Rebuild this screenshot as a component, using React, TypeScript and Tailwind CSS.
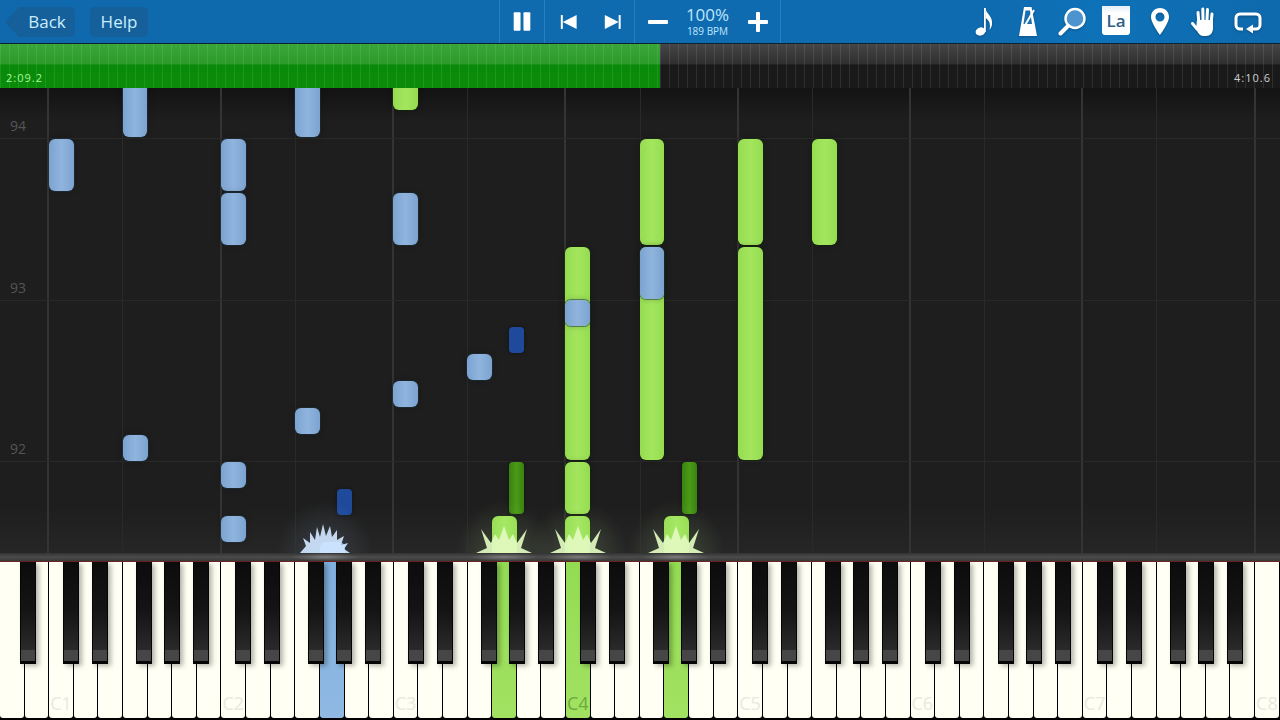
import React from "react";

const FONT = "font-['Open_Sans','Liberation_Sans',sans-serif]";

type NoteKind = "blue" | "green" | "navy" | "moss";
type Note = { x: number; y: number; w: number; h: number; kind: NoteKind };

// y values are page coordinates, the roll starts at 88
const notes: Note[] = [
  { x: 123, y: 80, w: 24, h: 57, kind: "blue" },
  { x: 295, y: 80, w: 25, h: 57, kind: "blue" },
  { x: 393, y: 80, w: 25, h: 30, kind: "green" },
  { x: 49, y: 139, w: 25, h: 52, kind: "blue" },
  { x: 221, y: 139, w: 25, h: 52, kind: "blue" },
  { x: 221, y: 193, w: 25, h: 52, kind: "blue" },
  { x: 393, y: 193, w: 25, h: 52, kind: "blue" },
  { x: 640, y: 139, w: 24, h: 106, kind: "green" },
  { x: 738, y: 139, w: 25, h: 106, kind: "green" },
  { x: 812, y: 139, w: 25, h: 106, kind: "green" },
  { x: 565, y: 247, w: 25, h: 213, kind: "green" },
  { x: 640, y: 247, w: 24, h: 213, kind: "green" },
  { x: 738, y: 247, w: 25, h: 213, kind: "green" },
  { x: 640, y: 247, w: 24, h: 52, kind: "blue" },
  { x: 565, y: 300, w: 25, h: 26, kind: "blue" },
  { x: 509, y: 327, w: 15, h: 26, kind: "navy" },
  { x: 467, y: 354, w: 25, h: 26, kind: "blue" },
  { x: 393, y: 381, w: 25, h: 26, kind: "blue" },
  { x: 295, y: 408, w: 25, h: 26, kind: "blue" },
  { x: 123, y: 435, w: 25, h: 26, kind: "blue" },
  { x: 221, y: 462, w: 25, h: 26, kind: "blue" },
  { x: 221, y: 516, w: 25, h: 26, kind: "blue" },
  { x: 337, y: 489, w: 15, h: 26, kind: "navy" },
  { x: 509, y: 462, w: 15, h: 52, kind: "moss" },
  { x: 682, y: 462, w: 15, h: 52, kind: "moss" },
  { x: 565, y: 462, w: 25, h: 52, kind: "green" },
  { x: 492, y: 516, w: 25, h: 50, kind: "green" },
  { x: 565, y: 516, w: 25, h: 50, kind: "green" },
  { x: 664, y: 516, w: 25, h: 50, kind: "green" },
  { x: 320, y: 542, w: 25, h: 26, kind: "blue" },
];

const noteStyles: Record<NoteKind, string> = {
  blue: "rounded-[6px] bg-[linear-gradient(90deg,#7ca3d0,#8fb4de_50%,#7ca3d0)] shadow-[0_0_0_1px_rgba(30,50,60,0.5),0_0_6px_rgba(0,0,0,0.25)]",
  green: "rounded-[6px] bg-[linear-gradient(90deg,#95dc50,#a3e65e_50%,#95dc50)] shadow-[0_0_0_1px_rgba(20,40,10,0.5),0_0_6px_rgba(0,0,0,0.25)]",
  navy: "rounded-[4px] bg-[#1f4a9c] shadow-[0_0_4px_rgba(0,0,0,0.4)]",
  moss: "rounded-[4px] bg-[linear-gradient(90deg,#39820f,#4a9a18_50%,#39820f)] shadow-[0_0_4px_rgba(0,0,0,0.4)]",
};

const octaveLines = [47, 220, 392, 564, 737, 909, 1081, 1254];
const fLines = [122, 295, 467, 640, 812, 984, 1156];
const measures = [
  { label: "94", line: 138 },
  { label: "93", line: 300 },
  { label: "92", line: 461 },
];

const whiteKeys = Array.from({ length: 52 }, (_, i) => i);
const labels: Record<number, string> = { 2: "C1", 9: "C2", 16: "C3", 23: "C4", 30: "C5", 37: "C6", 44: "C7", 51: "C8" };
const pressed: Record<number, string> = {
  13: "bg-[linear-gradient(180deg,#7fb0de,#8fb9e3)]",
  20: "bg-[linear-gradient(180deg,#93dc52,#a2e262)]",
  23: "bg-[linear-gradient(180deg,#93dc52,#a2e262)]",
  27: "bg-[linear-gradient(180deg,#93dc52,#a2e262)]",
};

const blackKeys: number[] = [20];
for (let o = 0; o < 7; o++) {
  for (const off of [0, 29, 73, 101, 130]) blackKeys.push(Math.round(63 + o * 172.3 + off));
}

const greenSpikes =
  "27,60 38,55 32,36 42,50 46,41 50,47 55,33 60,47 64,41 68,50 78,36 72,55 83,60";
const blueSpikes =
  "30,60 36,53 33,45 40,50 40,39 45,47 47,34 50,44 53,31 56,43 60,33 62,44 67,37 67,47 74,43 71,52 78,50 74,56 80,60";

const flares = [
  { x: 325, points: blueSpikes, color: "#cfe6ff", glow: "rgba(170,210,255,0.16)" },
  { x: 504, points: greenSpikes, color: "#e2fac0", glow: "rgba(200,255,160,0.18)" },
  { x: 578, points: greenSpikes, color: "#e2fac0", glow: "rgba(200,255,160,0.18)" },
  { x: 676, points: greenSpikes, color: "#e2fac0", glow: "rgba(200,255,160,0.18)" },
];

function Flare({ x, points, color, glow }: { x: number; points: string; color: string; glow: string }) {
  return (
    <div className="absolute bottom-0 h-[60px] w-[110px]" style={{ left: x - 55 }}>
      <div className="absolute inset-0" style={{ background: `radial-gradient(ellipse at 50% 100%, ${glow}, transparent 62%)` }} />
      <svg viewBox="0 0 110 60" className="absolute inset-0 h-full w-full">
        <defs>
          <filter id="flareBlur" x="-20%" y="-20%" width="140%" height="140%">
            <feGaussianBlur stdDeviation="0.7" />
          </filter>
        </defs>
        <polygon filter="url(#flareBlur)" fill={color} fillOpacity="0.92" points={points} />
      </svg>
    </div>
  );
}

function PianoRoll() {
  return (
    <div className="relative flex-1 overflow-hidden bg-[linear-gradient(180deg,#131313,#1e1e1e_7%,#1e1e1e_90%,#262626)]">
      {octaveLines.map((x) => (
        <div key={x} className="absolute inset-y-0 w-[2px] bg-[#343434]" style={{ left: x }} />
      ))}
      {fLines.map((x) => (
        <div key={x} className="absolute inset-y-0 w-px bg-[#2a2a2a]" style={{ left: x }} />
      ))}
      {measures.map((m) => (
        <React.Fragment key={m.label}>
          <div className="absolute inset-x-0 h-px bg-[#292929]" style={{ top: m.line - 88 }} />
          <span
            className={`absolute left-[10px] text-[14px] leading-[18px] text-[#555555] ${FONT}`}
            style={{ top: m.line - 88 - 21 }}
          >
            {m.label}
          </span>
        </React.Fragment>
      ))}
      {notes.map((n, i) => (
        <div
          key={i}
          className={`absolute ${noteStyles[n.kind]}`}
          style={{ left: n.x, top: n.y - 88, width: n.w, height: n.h }}
        />
      ))}
      {flares.map((f) => (
        <Flare key={f.x} {...f} />
      ))}
    </div>
  );
}

function Keyboard() {
  return (
    <div className="relative flex h-[158px] bg-black">
      {whiteKeys.map((i) => (
        <div
          key={i}
          className={`relative mb-[2px] mr-px flex flex-1 items-end justify-center rounded-b-[3px] pb-[3px] ${pressed[i] ?? "bg-[#fffff3]"}`}
        >
          {labels[i] && (
            <span className={`text-[18px] leading-[24px] ${i === 23 ? "text-[#6fa83f]" : "text-[#e9e9de]"} ${FONT}`}>
              {labels[i]}
            </span>
          )}
        </div>
      ))}
      {blackKeys.map((x) => (
        <div
          key={x}
          className="absolute top-0 flex h-[102px] w-[16px] flex-col bg-[#050505] px-[1px] pb-[3px] shadow-[3px_2px_5px_rgba(0,0,0,0.3)]"
          style={{ left: x }}
        >
          <div className="flex-1 bg-[linear-gradient(180deg,#0c0c0c,#141414_55%,#2a2a2a)]" />
          <div className="h-[11px] bg-[#464646]" />
        </div>
      ))}
    </div>
  );
}

function IconCell({ children }: { children: React.ReactNode }) {
  return (
    <svg viewBox="0 0 44 43" className="h-[43px] w-[44px] drop-shadow-[0_1px_1px_rgba(0,0,0,0.25)]" fill="white">
      {children}
    </svg>
  );
}

function Header() {
  return (
    <div className={`flex h-[44px] border-b border-[#0b2233] bg-[linear-gradient(90deg,#0f69ac,#0f6bb0_78%,#0e72b8_85%,#0f69ac)] ${FONT}`}>
      <div className="flex w-[499px] items-center gap-[15px] pl-[8px]">
        <div className="relative ml-[11px] flex h-[30px] w-[56px] items-center justify-center rounded-r-[5px] bg-[#155f9a] text-[17px] text-[#c9eeff]">
          <div className="absolute left-[-10px] top-[4px] h-[22px] w-[22px] rotate-45 rounded-[3px] bg-[#155f9a]" />
          <span className="relative">Back</span>
        </div>
        <div className="flex h-[30px] w-[58px] items-center justify-center rounded-[5px] bg-[#155f9a] text-[17px] text-[#c9eeff]">
          Help
        </div>
      </div>

      <div className="flex h-[43px] w-[45px] items-center justify-center border-l border-[#2a80bd]">
        <svg viewBox="0 0 45 43" className="h-[43px] w-[45px]" fill="white">
          <rect x="14" y="12" width="7" height="19" rx="1" />
          <rect x="24" y="12" width="7" height="19" rx="1" />
        </svg>
      </div>
      <div className="flex h-[43px] w-[90px] border-l border-[#2a80bd]">
        <svg viewBox="0 0 45 43" className="h-[43px] w-[45px]" fill="white">
          <rect x="16" y="15" width="2" height="14" />
          <polygon points="32,15 32,29 18,22" />
        </svg>
        <svg viewBox="0 0 45 43" className="h-[43px] w-[45px]" fill="white">
          <polygon points="15,15 15,29 29,22" />
          <rect x="29" y="15" width="2" height="14" />
        </svg>
      </div>
      <div className="flex h-[43px] w-[147px] items-center justify-center gap-[18px] border-x border-[#2a80bd]">
        <div className="h-[4px] w-[20px] rounded-[1px] bg-white" />
        <div className="flex w-[44px] flex-col items-center text-[#bfe6ff]">
          <span className="text-[17px] leading-[20px]">100%</span>
          <span className="whitespace-nowrap text-[10px] leading-[13px]">189 BPM</span>
        </div>
        <div className="relative h-[20px] w-[20px]">
          <div className="absolute inset-x-0 top-[8px] h-[4px] rounded-[1px] bg-white" />
          <div className="absolute inset-y-0 left-[8px] w-[4px] rounded-[1px] bg-white" />
        </div>
      </div>

      <div className="flex flex-1 justify-end pr-[10px]">
        <IconCell>
          <ellipse cx="18.5" cy="31.5" rx="5" ry="4" transform="rotate(-20 18.5 31.5)" />
          <rect x="22" y="8" width="1.8" height="24" />
          <path d="M23.5 8C24 14 31 16 30 24C30 26 29 28 27.5 30C29 24 27 20 23.5 18Z" />
        </IconCell>
        <IconCell>
          <path d="M18 7H25.5L31 36H13Z" />
          <path d="M19.5 10.5H24L26 24H17.5Z" fill="#1a6fae" />
          <path d="M28 10L18 27" stroke="white" strokeWidth="2" />
        </IconCell>
        <IconCell>
          <circle cx="25" cy="18.5" r="9.5" fill="#4d94cf" stroke="white" strokeWidth="2.4" />
          <path d="M18 26L10.5 33.5" stroke="white" strokeWidth="4" strokeLinecap="round" />
        </IconCell>
        <div className="flex h-[43px] w-[44px] justify-center pt-[6px]">
          <div className="flex h-[29px] w-[28px] items-center justify-center rounded-b-[3px] bg-[linear-gradient(180deg,#e4eef5,#ffffff_25%)] text-[17px] font-semibold text-[#2f5f85]">
            La
          </div>
        </div>
        <IconCell>
          <path
            fillRule="evenodd"
            d="M22 8C16.5 8 13 12 13 17C13 23 22 35 22 35C22 35 31 23 31 17C31 12 27.5 8 22 8ZM22 12.5A4.5 4.5 0 1 1 22 21.5A4.5 4.5 0 1 1 22 12.5Z"
          />
        </IconCell>
        <IconCell>
          <path d="M15 20H31V28C31 33 28 36 24 36H21C18 36 16 33 14 29Z" />
          <path
            d="M16.8 22L16 12.5M21 20L20.8 9M25 20L25.5 9.5M29.2 22L30 14M15 29L10.5 23.5"
            stroke="white"
            strokeWidth="3"
            strokeLinecap="round"
            fill="none"
          />
        </IconCell>
        <IconCell>
          <path
            d="M17 29H14A4 4 0 0 1 10 25V18A4 4 0 0 1 14 14H30A4 4 0 0 1 34 18V25A4 4 0 0 1 30 29H26"
            fill="none"
            stroke="white"
            strokeWidth="3"
          />
          <polygon points="27,24.5 27,33.5 20,29" />
        </IconCell>
      </div>
    </div>
  );
}

function Timeline() {
  const stripes =
    "absolute inset-0 bg-[repeating-linear-gradient(90deg,rgba(255,255,255,0.09)_0,rgba(255,255,255,0.09)_1px,transparent_1px,transparent_9px)]";
  return (
    <div className={`flex h-[44px] ${FONT}`}>
      <div className="relative w-[660px] bg-[linear-gradient(180deg,#3aa63a,#2a9a2a_46%,#098a09_47%,#0a8c0a)]">
        <div className={stripes} />
        <span className="absolute bottom-[3px] left-[6px] text-[11px] leading-[14px] tracking-[1px] text-[#a8f59a]">2:09.2</span>
      </div>
      <div className="relative flex-1 bg-[linear-gradient(180deg,#464646,#2e2e2e_46%,#191919_47%,#1a1a1a)]">
        <div className={stripes} />
        <span className="absolute bottom-[3px] right-[9px] text-[11px] leading-[14px] tracking-[1px] text-[#cfcfcf]">4:10.6</span>
      </div>
    </div>
  );
}

export default function App() {
  return (
    <div className="flex h-[720px] w-[1280px] flex-col overflow-hidden bg-black">
      <Header />
      <Timeline />
      <PianoRoll />
      <div className="relative h-[8px] overflow-hidden bg-[linear-gradient(180deg,#333,#4b4b4b_50%,#3a3a3a)]">
        {flares.map((f) => (
          <div
            key={f.x}
            className="absolute top-0 h-[8px] w-[70px] bg-[radial-gradient(ellipse_at_center,rgba(255,255,255,0.28),transparent_70%)]"
            style={{ left: f.x - 35 }}
          />
        ))}
      </div>
      <div className="h-px bg-[#6e2222]" />
      <Keyboard />
    </div>
  );
}
